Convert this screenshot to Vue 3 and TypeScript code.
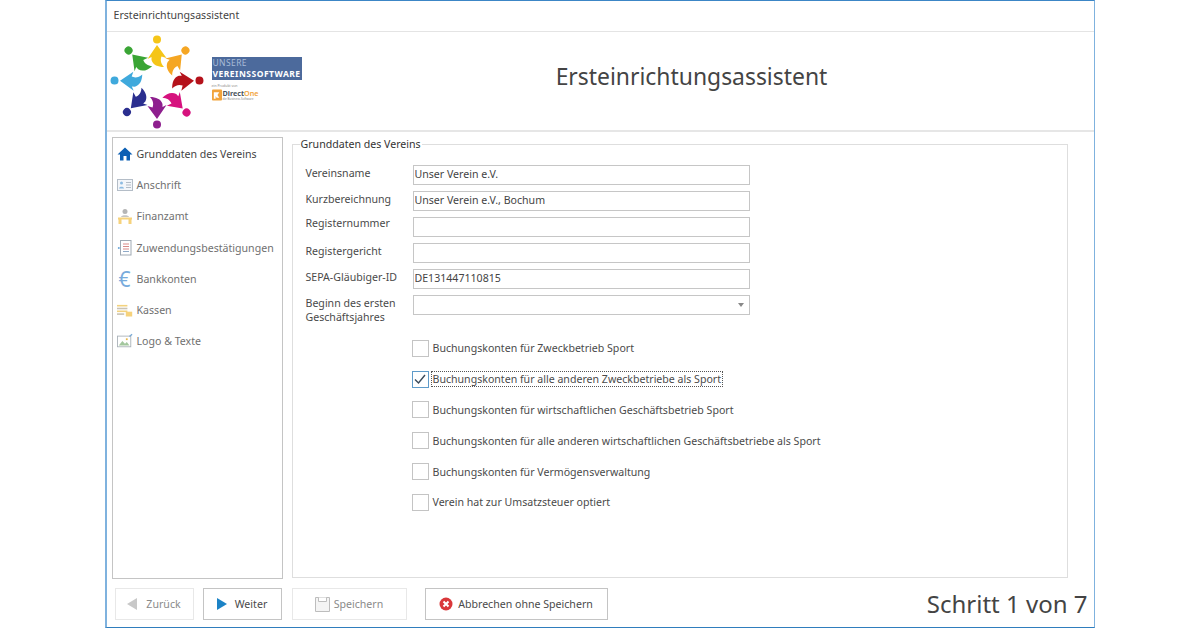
<script setup lang="ts">
const people = [
  { angle: 0, color: '#f5c518' },
  { angle: 42, color: '#f5a623' },
  { angle: 88, color: '#b5121b' },
  { angle: 136, color: '#d6127e' },
  { angle: 180, color: '#8e1f8e' },
  { angle: 225, color: '#2b2f8f' },
  { angle: 272, color: '#3fa9dc' },
  { angle: 318, color: '#3aa535' },
]
const nav = [
  { id: 'home', label: 'Grunddaten des Vereins', active: true },
  { id: 'card', label: 'Anschrift' },
  { id: 'tax', label: 'Finanzamt' },
  { id: 'doc', label: 'Zuwendungsbestätigungen' },
  { id: 'euro', label: 'Bankkonten' },
  { id: 'cash', label: 'Kassen' },
  { id: 'pic', label: 'Logo & Texte' },
]
const fields = [
  { label: 'Vereinsname', value: 'Unser Verein e.V.', cls: '' },
  { label: 'Kurzbereichnung', value: 'Unser Verein e.V., Bochum', cls: '' },
  { label: 'Registernummer', value: '', cls: 'up' },
  { label: 'Registergericht', value: '', cls: '' },
  { label: 'SEPA-Gläubiger-ID', value: 'DE131447110815', cls: '' },
]
const checks = [
  { label: 'Buchungskonten für Zweckbetrieb Sport', on: false },
  { label: 'Buchungskonten für alle anderen Zweckbetriebe als Sport', on: true },
  { label: 'Buchungskonten für wirtschaftlichen Geschäftsbetrieb Sport', on: false },
  { label: 'Buchungskonten für alle anderen wirtschaftlichen Geschäftsbetriebe als Sport', on: false },
  { label: 'Buchungskonten für Vermögensverwaltung', on: false },
  { label: 'Verein hat zur Umsatzsteuer optiert', on: false },
]
</script>

<template>
  <div class="page">
    <div class="window">
      <div class="titlebar">Ersteinrichtungsassistent</div>
      <header class="header">
        <div class="logo">
          <svg class="mark" width="96" height="100" viewBox="-48 -50 96 100">
            <g v-for="p in people" :key="p.angle" :transform="`rotate(${p.angle})`">
              <circle cx="0" cy="-42.500" r="4" :fill="p.color" />
              <path d="M0 -37 L9.500 -24 L4.500 -25.500 C3 -22 4 -18 7 -15 C1 -15 -4 -17 -5.500 -22 L-5.500 -25 L-9.500 -23 Z" :fill="p.color" />
            </g>
          </svg>
          <div class="brand">
            <div class="badge">
              <span class="b1">UNSERE</span>
              <span class="b2">VEREINSSOFTWARE</span>
            </div>
            <div class="by">ein Produkt von</div>
            <div class="d1">
              <svg width="10" height="12" viewBox="0 0 11 12"><rect width="11" height="12" rx="1" fill="#f2a33a" /><path d="M2 10V3h6L6 6 8 9H5L4 7v3z" fill="#fff" /></svg>
              <div class="d1c">
                <span class="d1t">Direct<b>One</b></span>
                <span class="d1s">die Business-Software</span>
              </div>
            </div>
          </div>
        </div>
        <h1 class="heading">Ersteinrichtungsassistent</h1>
      </header>

      <div class="body">
        <nav class="side">
          <div v-for="n in nav" :key="n.id" class="navitem" :class="{ active: n.active }">
            <span class="navicon">
              <svg v-if="n.id === 'home'" width="16" height="16" viewBox="0 0 16 16"><path d="M8 1.500 15.500 8.500H13V14.500H9.500V10H6.500V14.500H3V8.500H.5Z" fill="#0b5fb4" /></svg>
              <svg v-else-if="n.id === 'card'" width="16" height="14" viewBox="0 0 16 14"><rect x=".5" y="1.500" width="15" height="11" fill="#f3f6fa" stroke="#b4bdc7" /><circle cx="4.500" cy="5" r="1.500" fill="#8dbbe2" /><path d="M2 10.500C2 8 7 8 7 10.500Z" fill="#8dbbe2" /><path d="M9 4.500h5M9 7h5M9 9.500h5" stroke="#b4bdc7" /></svg>
              <svg v-else-if="n.id === 'tax'" width="16" height="17" viewBox="0 0 16 17"><circle cx="8" cy="3.500" r="2.500" fill="#b5b5b5" /><path d="M4 9C4 6.500 12 6.500 12 9Z" fill="#c4c4c4" /><path d="M1 9.500h14v2H1zM1.500 11.500h3V16h-3zM11.500 11.500h3V16h-3z" fill="#f6d27c" /></svg>
              <svg v-else-if="n.id === 'doc'" width="15" height="16" viewBox="0 0 15 16"><rect x="3.500" y=".5" width="10.500" height="14.500" fill="#fff" stroke="#a0aab4" /><path d="M6 4h6M6 6.500h6M6 9h6" stroke="#d98a88" /><path d="M6 11.500h6" stroke="#8faac8" /><circle cx="1.800" cy="8" r="1" fill="#6aa5d8" /></svg>
              <span v-else-if="n.id === 'euro'" class="euro">€</span>
              <svg v-else-if="n.id === 'cash'" width="20" height="15" viewBox="0 0 20 15"><path d="M0 1.500h13" stroke="#f3d27e" stroke-width="2" /><path d="M0 5h13" stroke="#c9c2b4" stroke-width="2" /><path d="M0 8.500h13" stroke="#f3d27e" stroke-width="2" /><path d="M0 12h9" stroke="#c9c2b4" stroke-width="2" /><rect x="11" y="9" width="8" height="6" fill="#f6d27c" /></svg>
              <svg v-else width="18" height="16" viewBox="0 0 18 16"><rect x=".5" y="2.500" width="15" height="12" fill="#fff" stroke="#a9b1b8" /><path d="M2 13 6 8l3 3 2-2 3 4Z" fill="#a3c79e" /><rect x="10" y="5" width="2" height="2" fill="#e8b84a" /><path d="M14 3 17 .5" stroke="#7aa9d4" stroke-width="1.500" /></svg>
            </span>
            <span class="navtext">{{ n.label }}</span>
          </div>
        </nav>

        <fieldset class="group">
          <legend class="legend">Grunddaten des Vereins</legend>
          <div class="form">
            <template v-for="f in fields" :key="f.label">
              <label class="flabel" :class="f.cls">{{ f.label }}</label>
              <input class="input" type="text" readonly :value="f.value" />
            </template>
            <label class="flabel two">Beginn des ersten<br />Geschäftsjahres</label>
            <div class="input select"><span class="caret"></span></div>
          </div>
          <div class="checks">
            <div v-for="c in checks" :key="c.label" class="check">
              <span class="box" :class="{ on: c.on }">
                <svg v-if="c.on" width="14" height="12" viewBox="0 0 14 12"><path d="M2 6.500 5.500 10 12 2" fill="none" stroke="#3a4a5a" stroke-width="1.400" /></svg>
              </span>
              <span class="clabel" :class="{ focus: c.on }">{{ c.label }}</span>
            </div>
          </div>
        </fieldset>
      </div>

      <footer class="footer">
        <button class="btn off back" type="button">
          <svg width="11" height="12" viewBox="0 0 11 12"><path d="M10 0V12L0 6Z" fill="#c8c8c8" /></svg>
          Zurück
        </button>
        <button class="btn next" type="button">
          <svg width="10" height="12" viewBox="0 0 10 12"><path d="M0 0V12L10 6Z" fill="#1c83c6" /></svg>
          Weiter
        </button>
        <button class="btn off save" type="button">
          <svg width="15" height="15" viewBox="0 0 15 15"><path d="M.5.5h14v14H.5z" fill="#f4f4f4" stroke="#bdbdbd" /><path d="M3.500.5v4h8v-4" fill="#fff" stroke="#bdbdbd" /></svg>
          Speichern
        </button>
        <button class="btn cancel" type="button">
          <svg width="14" height="14" viewBox="0 0 14 14"><circle cx="7" cy="7" r="6.500" fill="#d9373a" /><path d="M4.500 4.500l5 5M9.500 4.500l-5 5" stroke="#fff" stroke-width="2" /></svg>
          Abbrechen ohne Speichern
        </button>
        <div class="step">Schritt 1 von 7</div>
      </footer>
    </div>
  </div>
</template>

<style>
html, body { margin: 0; background: #fff; }
</style>

<style scoped>
.page {
  width: 1200px;
  height: 628px;
  display: flex;
  justify-content: center;
  overflow: hidden;
  background: #fff;
  font-family: "Noto Sans", "Liberation Sans", sans-serif;
  font-size: 10.600px;
  color: #4a4a4a;
}
.window {
  width: 990px;
  height: 628px;
  margin-left: -1px;
  box-sizing: border-box;
  border: 1px solid #7fb2de;
  border-left-width: 2px;
  border-top-color: #3c86c6;
  border-bottom-color: #2f7dbd;
  display: flex;
  flex-direction: column;
}
.titlebar {
  height: 30px;
  line-height: 28px;
  padding-left: 7px;
  border-bottom: 1px solid #e4e4e4;
  color: #444;
  flex: none;
}
.header {
  height: 100px;
  display: flex;
  border-bottom: 2px solid #e6e6e6;
  box-sizing: border-box;
  flex: none;
}
.logo {
  width: 201px;
  display: flex;
  flex: none;
}
.mark { margin: 0 0 0 2px; flex: none; }
.brand { margin: 25px 0 0 7px; display: flex; flex-direction: column; }
.badge {
  width: 90px;
  height: 23px;
  background: #4c6a9c;
  display: flex;
  flex-direction: column;
  padding-left: 1px;
  box-sizing: border-box;
  line-height: 11px;
}
.b1 { color: #a9bcd8; font-size: 8.500px; letter-spacing: .4px; }
.b2 { color: #fff; font-size: 8.500px; font-weight: 700; letter-spacing: .5px; white-space: nowrap; }
.by { font-size: 3.500px; color: #888; margin-top: 3px; line-height: 5px; }
.d1 { display: flex; align-items: flex-start; gap: 1px; margin-top: 1px; }
.d1c { display: flex; flex-direction: column; }
.d1t { font-size: 7.200px; font-weight: 700; color: #4a5560; line-height: 9px; }
.d1t b { color: #f2a33a; font-weight: 600; }
.d1s { font-size: 3px; color: #888; line-height: 3px; white-space: nowrap; }
.heading {
  flex: 1;
  margin: 0;
  padding-right: 18px;
  text-align: center;
  font-weight: 400;
  font-size: 22.900px;
  line-height: 89px;
  color: #444;
}
.body {
  flex: 1;
  min-height: 0;
  display: flex;
  align-items: flex-start;
  padding: 5px 26px 0 5px;
  gap: 9px;
}
.side {
  width: 171px;
  height: 442px;
  box-sizing: border-box;
  border: 1px solid #c4c4c4;
  padding-top: .5px;
  flex: none;
}
.navitem {
  height: 31.200px;
  display: flex;
  align-items: center;
  padding-left: 4px;
  color: #707070;
  white-space: nowrap;
}
.navitem.active { color: #444; }
.navicon {
  width: 16px;
  margin-right: 4px;
  display: flex;
  align-items: center;
  justify-content: center;
  flex: none;
}
.euro { font-size: 21px; line-height: 16px; color: #78abdc; }
.group {
  flex: 1;
  margin: 0;
  height: 441px;
  box-sizing: border-box;
  border: 1px solid #dedede;
  padding: 14px 0 0 13px;
  min-width: 0;
}
.legend {
  margin-left: -6px;
  padding: 0 1px;
  line-height: 14px;
  color: #333;
}
.form {
  display: grid;
  grid-template-columns: 107px 337px;
  grid-auto-rows: 20px;
  row-gap: 6px;
}
.flabel { line-height: 16px; white-space: nowrap; }
.flabel.up { margin-top: -2px; }
.flabel.two { line-height: 14px; margin-top: 1px; }
.input {
  width: 337px;
  height: 20px;
  box-sizing: border-box;
  border: 1px solid #c6c6c6;
  padding: 0 1px 2px;
  margin: 0;
  font: inherit;
  color: #444;
  outline: none;
  background: #fff;
  border-radius: 0;
}
.select { position: relative; }
.caret {
  position: absolute;
  right: 5px;
  top: 7px;
  border-left: 3.500px solid transparent;
  border-right: 3.500px solid transparent;
  border-top: 4px solid #888;
}
.checks {
  margin: 18px 0 0 106px;
  display: flex;
  flex-direction: column;
}
.check {
  height: 30.800px;
  display: flex;
  align-items: center;
  white-space: nowrap;
}
.box {
  width: 17px;
  height: 17px;
  box-sizing: border-box;
  border: 1px solid #c4c4c4;
  margin-right: 2px;
  display: flex;
  align-items: center;
  justify-content: center;
  flex: none;
}
.box.on { border-color: #5f9bc9; }
.clabel { padding: 0 1px; border: 1px dotted transparent; }
.clabel.focus { border-color: #555; }
.footer {
  height: 48px;
  flex: none;
  display: flex;
  align-items: flex-start;
  padding: 9px 6px 0 8px;
  box-sizing: border-box;
}
.btn {
  height: 32px;
  box-sizing: border-box;
  background: #fff;
  border: 1px solid #c4c4c4;
  display: flex;
  align-items: center;
  justify-content: center;
  gap: 8px;
  font: inherit;
  color: #4a4a4a;
  padding: 0;
  flex: none;
}
.btn.off { border-color: #e8e8e8; color: #8a8a8a; }
.back { width: 79px; margin-right: 9px; }
.next { width: 79px; margin-right: 10px; }
.save { width: 115px; margin-right: 18px; gap: 4px; }
.cancel { width: 183px; gap: 5px; }
.step {
  margin-left: auto;
  font-size: 24px;
  line-height: 32px;
  color: #444;
  white-space: nowrap;
}
</style>
